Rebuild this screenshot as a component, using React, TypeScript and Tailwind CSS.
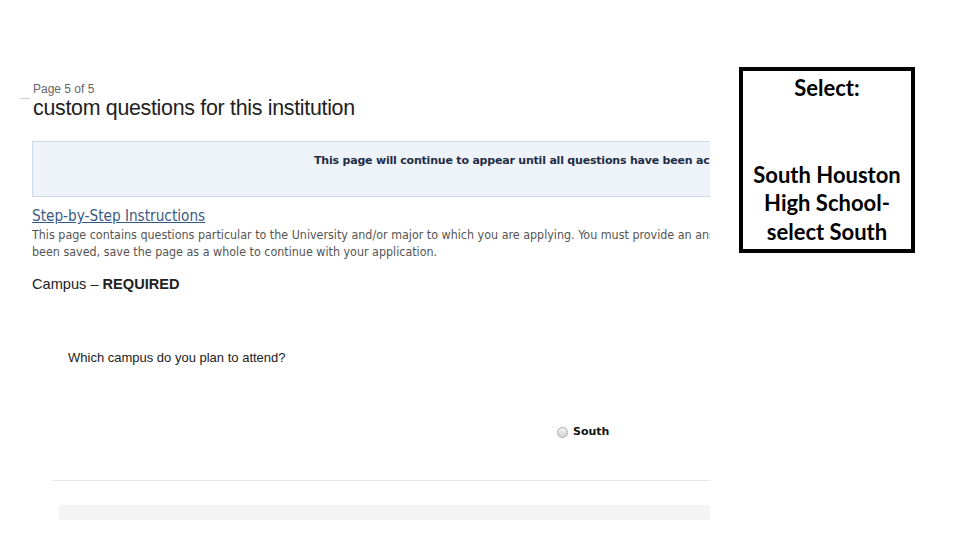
import React from 'react';

const Callout = () => (
  <div className="w-[176px] h-[186px] border-4 border-black flex flex-col items-center font-['Lato','Open_Sans',sans-serif] font-bold text-[22px] text-black leading-[28.5px] text-center">
    <div className="mt-[3px]">Select:</div>
    <div className="mt-[58px]">
      South Houston
      <br />
      High School-
      <br />
      select South
    </div>
  </div>
);

const FormShot = () => (
  <div className="w-[690px] h-[450px] overflow-hidden relative">
    <div className="absolute left-0 top-[28px] w-[10px] h-px bg-[#cfcfcf]" />
    <div className="pl-[13px] pt-[12px] font-['Liberation_Sans',Arial,sans-serif]">
      <div className="text-[12px] leading-[14px] text-[#666]">Page 5 of 5</div>
      <h1 className="text-[21.4px] leading-[24px] text-[#222] tracking-[-0.3px]">custom questions for this institution</h1>
    </div>

    <div className="ml-[12px] mt-[21px] w-[700px] h-[56px] bg-[#eef3fa] border border-[#cdd9e8] font-['DejaVu_Sans',Verdana,sans-serif]">
      <div className="pl-[281px] pt-[11px] text-[11px] font-bold text-[#1f2d44] whitespace-nowrap tracking-[-0.2px]">
        This page will continue to appear until all questions have been ac
      </div>
    </div>

    <div className="pl-[12px] pt-[10px] font-['DejaVu_Sans_Condensed','DejaVu_Sans',sans-serif]">
      <div className="text-[15.2px] leading-[19px] text-[#3a5a86] underline">Step-by-Step Instructions</div>
      <div className="text-[12.4px] leading-[17px] text-[#555] whitespace-nowrap">
        This page contains questions particular to the University and/or major to which you are applying. You must provide an ans
        <br />
        been saved, save the page as a whole to continue with your application.
      </div>
    </div>

    <div className="pl-[12px] pt-[14px] font-['Liberation_Sans',Arial,sans-serif] text-[14.6px] text-[#222]">
      Campus – <span className="font-bold">REQUIRED</span>
    </div>

    <div className="pl-[48px] pt-[52px] font-['Liberation_Sans',Arial,sans-serif] text-[13px] text-[#222]">
      Which campus do you plan to attend?
    </div>

    <div className="pl-[537px] pt-[57px] flex items-center gap-[5px] font-['DejaVu_Sans',Verdana,sans-serif]">
      <span className="w-[11px] h-[11px] rounded-full border border-[#a9a9a9] bg-gradient-to-b from-[#f4f4f4] to-[#d4d4d4]" />
      <span className="text-[11px] font-bold text-[#111]">South</span>
    </div>

    <div className="ml-[32px] mt-[39px] h-px bg-[#e6e6e6]" />
    <div className="ml-[39px] mt-[24px] h-[15px] bg-[#f4f4f4]" />
  </div>
);

export default function App() {
  return (
    <div className="w-[960px] h-[540px] bg-white flex">
      <div className="pl-[20px] pt-[70px]">
        <FormShot />
      </div>
      <div className="pl-[29px] pt-[67px]">
        <Callout />
      </div>
    </div>
  );
}
